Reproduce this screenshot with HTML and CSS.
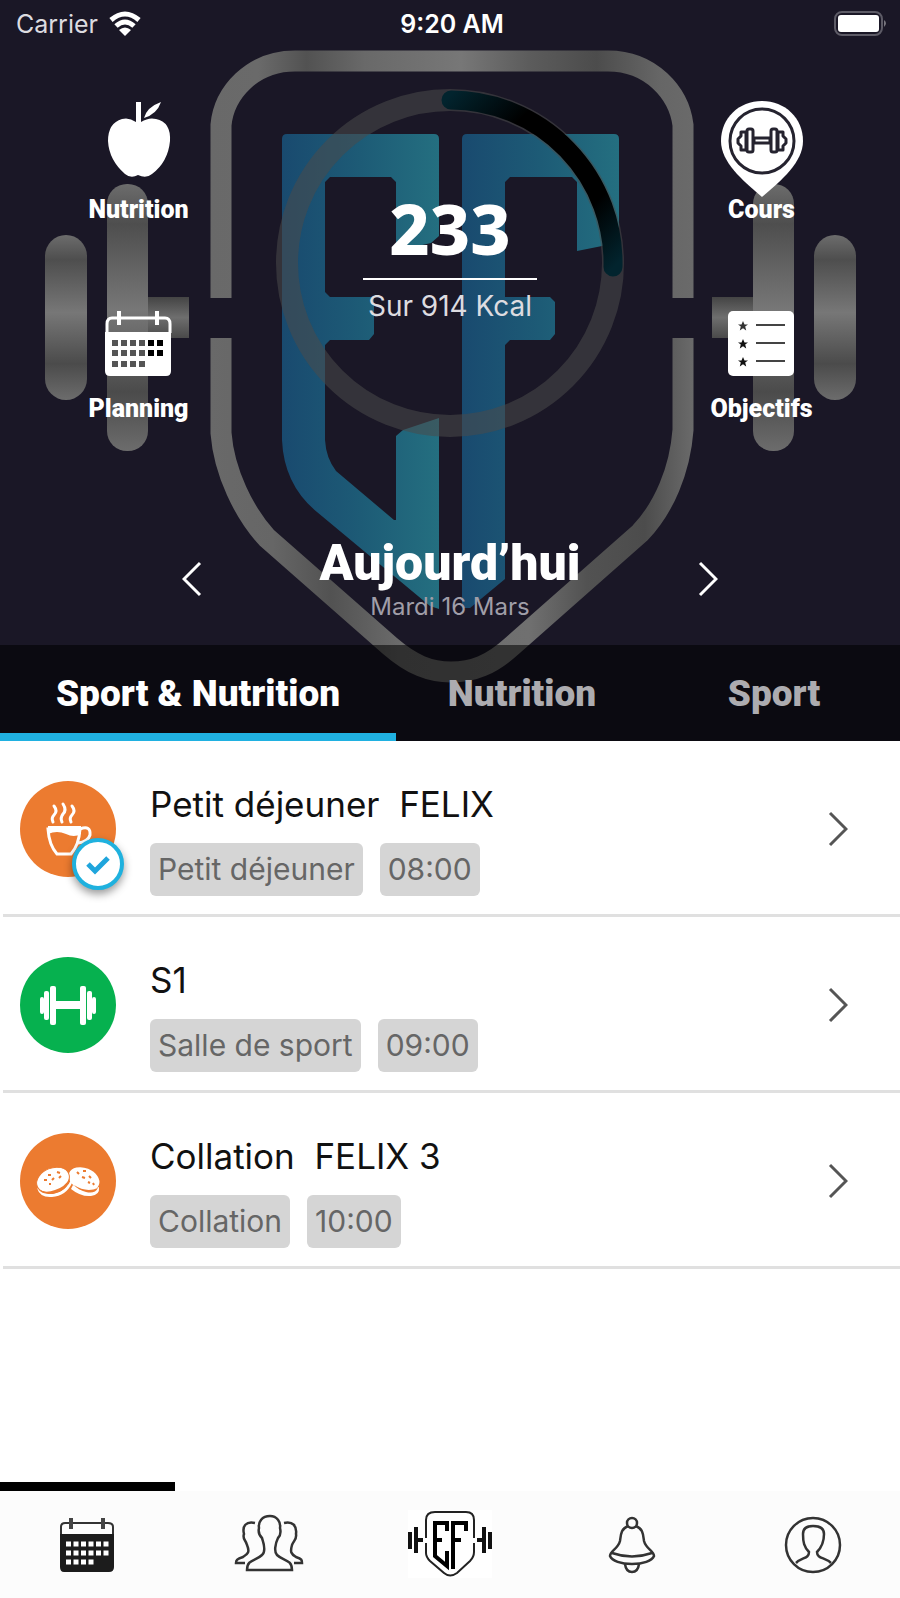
FILE: index.html
```
<!DOCTYPE html>
<html lang="fr">
<head>
    <meta charset="UTF-8">
    <meta name="viewport" content="width=device-width, initial-scale=1.0">
    <title>Aujourd’hui</title>
    <link rel="stylesheet" href="styles.css">
</head>
<body>
    <header class="hero">
        <!-- Emblem behind the dashboard -->
        <svg class="emblem" viewBox="0 0 900 741" aria-hidden="true">
            <defs>
                <linearGradient id="steel" gradientUnits="userSpaceOnUse" x1="210" y1="0" x2="693" y2="0">
                    <stop offset="0" stop-color="#696969"/>
                    <stop offset=".1" stop-color="#6a6a6a"/>
                    <stop offset=".2" stop-color="#525252"/>
                    <stop offset=".32" stop-color="#696969"/>
                    <stop offset=".52" stop-color="#777"/>
                    <stop offset=".66" stop-color="#5c5c5c"/>
                    <stop offset=".8" stop-color="#4c4c4c"/>
                    <stop offset=".93" stop-color="#666"/>
                    <stop offset="1" stop-color="#6a6a6a"/>
                </linearGradient>
                <linearGradient id="steelBottom" gradientUnits="userSpaceOnUse" x1="210" y1="0" x2="693" y2="0">
                    <stop offset="0" stop-color="#696969"/>
                    <stop offset=".13" stop-color="#666"/>
                    <stop offset=".25" stop-color="#525252"/>
                    <stop offset=".4" stop-color="#6c6c6c"/>
                    <stop offset=".66" stop-color="#707070"/>
                    <stop offset=".78" stop-color="#525252"/>
                    <stop offset=".9" stop-color="#4c4c4c"/>
                    <stop offset="1" stop-color="#6a6a6a"/>
                </linearGradient>
                <linearGradient id="plate" x1="0" y1="0" x2="0" y2="1">
                    <stop offset="0" stop-color="#6c6c6c"/>
                    <stop offset=".15" stop-color="#4e4e4e"/>
                    <stop offset=".47" stop-color="#777"/>
                    <stop offset=".78" stop-color="#4b4b4b"/>
                    <stop offset="1" stop-color="#6c6c6c"/>
                </linearGradient>
                <linearGradient id="bar" x1="0" y1="0" x2="0" y2="1">
                    <stop offset="0" stop-color="#444"/>
                    <stop offset=".5" stop-color="#6e6e6e"/>
                    <stop offset="1" stop-color="#4a4a4a"/>
                </linearGradient>
                <linearGradient id="blue">
                    <stop offset="0" stop-color="#194a6f"/>
                    <stop offset=".5" stop-color="#1d5b76"/>
                    <stop offset="1" stop-color="#246f80"/>
                </linearGradient>
            </defs>
            <g fill="url(#plate)">
                <rect x="45" y="235" width="42" height="165" rx="21"/>
                <rect x="107" y="184" width="41" height="267" rx="20"/>
                <rect x="753" y="184" width="41" height="267" rx="20"/>
                <rect x="814" y="235" width="42" height="165" rx="21"/>
            </g>
            <g fill="url(#bar)">
                <rect x="148" y="297" width="41" height="41"/>
                <rect x="712" y="297" width="41" height="41"/>
            </g>
            <g fill="none" stroke-width="21">
                <path d="M221 298V125C224 93 252 61 295 61H608C651 61 679 93 683 125V298" stroke="url(#steel)"/>
                <path d="M221 338V433C224 472 244 513 267 538L390 646C412 665 430 672 451 672C473 672 491 665 512 646L640 533C664 508 680 470 683 430V338" stroke="url(#steelBottom)"/>
            </g>
            <g fill="url(#blue)">
                <path d="M287 134H434Q439 134 439 139V236L431 243L396 251V182L391 177H330L325 182V292L330 297H374V334L369 340H330L325 345V440Q326 458 336 471L394 520H396V436L403 430L439 418V609L430 606L317 512Q284 485 282 440V139Q282 134 287 134Z"/>
                <path d="M467 134H614Q619 134 619 139V240L602 246L577 251V182L572 177H510L505 182V297H550L555 302V334L550 340H510L505 345V579L470 608H462V139Q462 134 467 134Z"/>
            </g>
        </svg>

        <div class="status-bar">
            <span class="carrier">Carrier
                <svg class="wifi" viewBox="0 0 34 26" aria-hidden="true">
                    <path d="M3 9Q17 -3 31 9M8 15Q17 7 26 15" fill="none" stroke="#fff" stroke-width="5"/>
                    <path d="M11 19Q17 14 23 19L17 25Z" fill="#fff"/>
                </svg>
            </span>
            <span class="clock">9:20 AM</span>
            <svg class="battery" viewBox="0 0 54 26" aria-hidden="true">
                <rect x="1" y="1" width="47" height="23" rx="7" fill="none" stroke="#5d5b66" stroke-width="2"/>
                <rect x="4" y="4" width="41" height="17" rx="3" fill="#fff"/>
                <path d="M50 9Q54 12 50 16Z" fill="#77757d"/>
            </svg>
        </div>

        <div class="dashboard">
            <nav class="shortcuts">
                <a href="#nutrition" class="shortcut">
                    <svg class="shortcut-icon" viewBox="0 0 82 98" aria-hidden="true">
                        <path d="M39 22V2H44V22Q52 17 59 19Q74 22 73 41Q71 62 55 74Q49 79 41 75Q34 79 28 74Q12 60 11 41Q11 23 25 19Q32 17 39 22Z" fill="#fff"/>
                        <path d="M47 18Q50 7 64 2Q60 14 47 18Z" fill="#fff"/>
                    </svg>
                    <span>Nutrition</span>
                </a>
                <a href="#planning" class="shortcut">
                    <svg class="shortcut-icon" viewBox="0 0 82 98" aria-hidden="true">
                        <path d="M10 34V25Q10 19 15 19H68Q73 19 73 25V34" fill="none" stroke="#fff" stroke-width="3"/>
                        <path d="M8 33H74V72Q74 77 69 77H13Q8 77 8 72Z" fill="#fff"/>
                        <path d="M22 12V26M60 12V26" stroke="#fff" stroke-width="4"/>
                        <path d="M15 44H48M15 54H48M15 65H48" stroke="#555" stroke-width="6" stroke-dasharray="6 3"/>
                        <path d="M51 44H66M51 54H66" stroke="#000" stroke-width="6" stroke-dasharray="6 3"/>
                    </svg>
                    <span>Planning</span>
                </a>
            </nav>

            <div class="calories">
                <svg class="ring" viewBox="0 0 350 350" aria-hidden="true">
                    <defs>
                        <linearGradient id="arc" gradientUnits="userSpaceOnUse" x1="170" y1="12" x2="336" y2="182">
                            <stop offset="0" stop-color="#02242e"/>
                            <stop offset=".28" stop-color="#000"/>
                            <stop offset=".75" stop-color="#000"/>
                            <stop offset="1" stop-color="#02242e"/>
                        </linearGradient>
                    </defs>
                    <circle cx="175" cy="175" r="163" fill="none" stroke="#4b4b4b" stroke-opacity=".55" stroke-width="22"/>
                    <path d="M176 12A163 163 0 0 1 338 179" fill="none" stroke="url(#arc)" stroke-width="19" stroke-linecap="round"/>
                </svg>
                <div class="calories-text">
                    <strong class="calories-value">233</strong>
                    <span class="calories-goal">Sur 914 Kcal</span>
                </div>
            </div>

            <nav class="shortcuts">
                <a href="#cours" class="shortcut">
                    <svg class="shortcut-icon" viewBox="0 0 82 98" aria-hidden="true">
                        <path d="M41 1C64 1 82 18 82 41C82 62 61 80 41 97C21 80 0 62 0 41C0 18 18 1 41 1Z" fill="#fff"/>
                        <circle cx="41" cy="41" r="32" fill="none" stroke="#25232f" stroke-width="3"/>
                        <g fill="#fff" stroke="#25232f" stroke-width="3" stroke-linejoin="round">
                            <path d="M33 38H49V43H33Z"/>
                            <path d="M25 32H20V36L17 39V43L20 46V50H25ZM57 32H62V36L65 39V43L62 46V50H57Z"/>
                            <rect x="26" y="29" width="6" height="23" rx="2"/>
                            <rect x="50" y="29" width="6" height="23" rx="2"/>
                        </g>
                    </svg>
                    <span>Cours</span>
                </a>
                <a href="#objectifs" class="shortcut">
                    <svg class="shortcut-icon" viewBox="0 0 82 98" aria-hidden="true">
                        <defs>
                            <path id="star" d="M0 -5L1.500 -1.600H5L2.200 .6L3.200 4.500L0 2.200L-3.200 4.500L-2.200 .6L-5 -1.600H-1.500Z"/>
                        </defs>
                        <rect x="8" y="12" width="66" height="65" rx="5" fill="#fff"/>
                        <path d="M36 26H65M36 44H65M36 62H65" stroke="#444" stroke-width="2"/>
                        <use href="#star" x="23" y="27" fill="#333"/>
                        <use href="#star" x="23" y="45" fill="#111"/>
                        <use href="#star" x="23" y="63" fill="#111"/>
                    </svg>
                    <span>Objectifs</span>
                </a>
            </nav>
        </div>

        <div class="day">
            <button type="button" class="day-button" aria-label="Jour précédent">
                <svg viewBox="0 0 20 36" aria-hidden="true"><path d="M18 2L2 18L18 34"/></svg>
            </button>
            <div class="day-text">
                <h1>Aujourd’hui</h1>
                <p>Mardi 16 Mars</p>
            </div>
            <button type="button" class="day-button" aria-label="Jour suivant">
                <svg viewBox="0 0 20 36" aria-hidden="true"><path d="M2 2L18 18L2 34"/></svg>
            </button>
        </div>

        <div class="tabs">
            <button type="button" class="tab active">Sport &amp; Nutrition</button>
            <button type="button" class="tab">Nutrition</button>
            <button type="button" class="tab">Sport</button>
        </div>
    </header>

    <main class="activities">
        <a href="#petit-dejeuner" class="activity">
            <span class="activity-icon">
                <svg viewBox="0 0 96 96" aria-hidden="true">
                    <circle cx="48" cy="48" r="48" fill="#ec7b30"/>
                    <g fill="none" stroke="#fff" stroke-width="3">
                        <path d="M34 25Q38 30 34 34Q31 37 33 41M43 23Q47 29 43 33Q40 37 42 41M52 25Q56 30 52 34Q49 37 51 41" stroke-linecap="round"/>
                        <path d="M28 48H60Q59 64 51 73H37Q29 64 28 48Z"/>
                        <path d="M60 48Q71 44 70 54Q68 61 58 62"/>
                    </g>
                    <path d="M28 45H61V53Q54 57 46 53Q37 49 28 53Z" fill="#fff"/>
                </svg>
                <svg class="done" viewBox="0 0 52 52" aria-hidden="true">
                    <circle cx="26" cy="26" r="24" fill="#fff" stroke="#1fb1de" stroke-width="4"/>
                    <path d="M16 26L23 33L36 20" fill="none" stroke="#1fa5dc" stroke-width="5"/>
                </svg>
            </span>
            <span class="activity-body">
                <span class="activity-title">Petit déjeuner&nbsp; FELIX</span>
                <span class="chips"><span class="chip">Petit déjeuner</span><span class="chip">08:00</span></span>
            </span>
            <svg class="chevron" viewBox="0 0 20 36" aria-hidden="true"><path d="M2 2L18 18L2 34"/></svg>
        </a>
        <a href="#s1" class="activity">
            <span class="activity-icon">
                <svg viewBox="0 0 96 96" aria-hidden="true">
                    <circle cx="48" cy="48" r="48" fill="#06b14f"/>
                    <g fill="#fff">
                        <rect x="36" y="44" width="24" height="8"/>
                        <rect x="30" y="29" width="6" height="39" rx="2"/>
                        <rect x="60" y="29" width="6" height="39" rx="2"/>
                        <rect x="24" y="34" width="5" height="29" rx="2"/>
                        <rect x="67" y="34" width="5" height="29" rx="2"/>
                        <rect x="20" y="40" width="4" height="17" rx="2"/>
                        <rect x="72" y="40" width="4" height="17" rx="2"/>
                    </g>
                </svg>
            </span>
            <span class="activity-body">
                <span class="activity-title">S1</span>
                <span class="chips"><span class="chip">Salle de sport</span><span class="chip">09:00</span></span>
            </span>
            <svg class="chevron" viewBox="0 0 20 36" aria-hidden="true"><path d="M2 2L18 18L2 34"/></svg>
        </a>
        <a href="#collation" class="activity">
            <span class="activity-icon">
                <svg viewBox="0 0 96 96" aria-hidden="true">
                    <circle cx="48" cy="48" r="48" fill="#ec7b30"/>
                    <g fill="#fff">
                        <ellipse cx="64" cy="46" rx="16" ry="11" transform="rotate(22 64 46)"/>
                        <path d="M79 54Q80 62 71 63Q61 64 51 56L53 52Q66 62 79 54Z"/>
                        <ellipse cx="33" cy="47" rx="17" ry="12" transform="rotate(-22 33 47)" stroke="#ec7b30"/>
                        <path d="M17 55Q20 65 32 64Q46 63 52 50V45Q46 59 33 61Q23 61 17 55Z"/>
                    </g>
                    <path d="M18 56Q25 61 35 57Q45 54 50 45Q49 56 36 60Q23 63 18 56ZM54 52Q66 60 78 55Q75 61 66 59Q58 57 54 52Z" fill="#ec7b30"/>
                    <path d="M24 47H27M28 42H31M32 47L34 45M37 39L40 40M39 45L41 43M29 51H31M57 39L59 41M63 38H66M62 44L65 45M69 43L71 45M68 49L70 50M73 50L74 52" stroke="#ec7b30" stroke-width="2"/>
                </svg>
            </span>
            <span class="activity-body">
                <span class="activity-title">Collation&nbsp; FELIX 3</span>
                <span class="chips"><span class="chip">Collation</span><span class="chip">10:00</span></span>
            </span>
            <svg class="chevron" viewBox="0 0 20 36" aria-hidden="true"><path d="M2 2L18 18L2 34"/></svg>
        </a>
    </main>

    <footer class="bottom">
        <div class="indicator"></div>
        <nav class="bottom-nav">
            <a href="#planning" aria-label="Planning">
                <svg viewBox="0 0 84 68" aria-hidden="true">
                    <path d="M16 28V17Q16 13 20 13H63Q68 13 68 17V28" fill="none" stroke="#333" stroke-width="2"/>
                    <path d="M15 24H69V57Q69 62 64 62H19Q15 62 15 57Z" fill="#1c1c1c"/>
                    <path d="M26 8V19M58 8V19" stroke="#444" stroke-width="4"/>
                    <path d="M21 34H64M21 43H64M21 52H49" stroke="#fff" stroke-width="5" stroke-dasharray="5 2.500"/>
                </svg>
            </a>
            <a href="#communaute" aria-label="Communauté">
                <svg viewBox="0 0 84 68" aria-hidden="true">
                    <g fill="none" stroke="#333" stroke-width="2.500">
                        <path d="M43 6C35 6 31 12 32 18C31 22 33 26 35 28C37 34 39 42 35 45C29 51 20 49 20 60H65C65 49 56 51 50 45C47 42 48 34 51 28C53 26 54 22 53 18C54 12 50 6 43 6Z"/>
                        <path d="M28 13C19 11 15 16 17 24C15 29 19 30 20 35C23 42 21 44 16 47C10 49 9 50 9 53H18"/>
                        <path d="M57 13C66 11 70 16 69 24C70 29 67 30 65 35C63 42 64 44 69 47C75 49 75 50 75 53H67"/>
                    </g>
                </svg>
            </a>
            <a href="#accueil" class="home" aria-label="Accueil">
                <svg viewBox="0 0 84 68" aria-hidden="true">
                    <path d="M18 28V10Q18 2 27 2H58Q66 2 66 10V28M18 33V43Q18 47 22 51L36 63Q42 68 49 63L62 51Q66 47 66 42V33" fill="none" stroke="#222" stroke-width="2"/>
                    <path d="M2 22V39M8 17V43M8 30H15M82 22V39M76 17V43M76 30H69" fill="none" stroke="#111" stroke-width="4"/>
                    <path d="M39 21V13H27V46L39 56V41M27 30H34M45 59V13H58V21M45 30H53" fill="none" stroke="#000" stroke-width="4"/>
                </svg>
            </a>
            <a href="#notifications" aria-label="Notifications">
                <svg viewBox="0 0 84 68" aria-hidden="true">
                    <g fill="none" stroke="#333" stroke-width="2.500">
                        <circle cx="42" cy="13" r="5"/>
                        <path d="M38 16C31 19 31 24 30 31C28 39 20 41 20 46C22 51 31 54 42 54C53 54 62 51 64 46C64 41 56 39 54 31C53 24 53 19 46 16"/>
                        <path d="M22 43Q42 50 62 43M35 54Q36 62 42 62Q48 62 49 54"/>
                    </g>
                </svg>
            </a>
            <a href="#profil" aria-label="Profil">
                <svg viewBox="0 0 84 68" aria-hidden="true">
                    <g fill="none" stroke="#333" stroke-width="2.500">
                        <circle cx="42" cy="35" r="27"/>
                        <path d="M25 53C31 47 38 49 38 42C33 37 32 32 32 24C32 18 36 16 42 16C49 16 53 18 53 24C53 32 51 37 46 42C46 49 54 47 60 53"/>
                    </g>
                </svg>
            </a>
        </nav>
    </footer>
</body>
</html>
```

FILE: styles.css
```
* {
    box-sizing: border-box;
}
body {
    margin: 0;
    min-height: 100vh;
    display: flex;
    flex-direction: column;
    font-family: Inter, "Liberation Sans", sans-serif;
    background: #fff;
    color: #111;
}
a {
    color: inherit;
    text-decoration: none;
}
button {
    border: none;
    background: none;
    padding: 0;
    color: inherit;
    font: inherit;
    cursor: pointer;
}
svg {
    display: block;
}

/* Header */
.hero {
    position: relative;
    background: #1a1726;
    color: #fff;
}
.emblem {
    position: absolute;
    top: 0;
    left: 0;
    width: 100%;
    height: 100%;
}
.status-bar,
.dashboard,
.day,
.tabs {
    position: relative;
}
.status-bar {
    display: grid;
    grid-template-columns: 1fr auto 1fr;
    align-items: center;
    height: 48px;
    padding: 0 12px 0 16px;
    font-size: 25px;
}
.carrier {
    display: flex;
    align-items: center;
    gap: 10px;
    color: #dddce0;
}
.wifi {
    width: 34px;
    height: 26px;
}
.clock {
    font-weight: 600;
}
.battery {
    width: 54px;
    height: 26px;
    justify-self: end;
}
.dashboard {
    display: grid;
    grid-template-columns: 1fr 350px 1fr;
    padding: 40px 2px 0;
}
.shortcuts {
    display: flex;
    flex-direction: column;
    align-items: center;
    gap: 77px;
    padding-top: 12px;
}
.shortcut {
    display: flex;
    flex-direction: column;
    align-items: center;
    font-family: Roboto, sans-serif;
    font-size: 25px;
    font-weight: 900;
    line-height: 24px;
}
.shortcut-icon {
    width: 82px;
    height: 98px;
}
.calories {
    display: grid;
}
.ring,
.calories-text {
    grid-area: 1 / 1;
}
.ring {
    width: 350px;
    height: 350px;
}
.calories-text {
    display: flex;
    flex-direction: column;
    align-items: center;
    padding-top: 98px;
}
.calories-value {
    width: 174px;
    padding-bottom: 8px;
    border-bottom: 2px solid #fff;
    font-family: "Noto Sans", sans-serif;
    font-size: 70px;
    font-weight: 800;
    line-height: 84px;
    text-align: center;
}
.calories-goal {
    margin-top: 8px;
    color: #dddce0;
    font-size: 28px;
    line-height: 36px;
}
.day {
    display: flex;
    justify-content: space-between;
    align-items: center;
    height: 207px;
    padding: 74px 182px 0;
}
.day-button svg {
    width: 20px;
    height: 36px;
    fill: none;
    stroke: #fff;
    stroke-width: 3;
}
.day-text {
    text-align: center;
}
.day-text h1 {
    margin: 0;
    font-family: Roboto, sans-serif;
    font-size: 50px;
    font-weight: 900;
    line-height: 56px;
}
.day-text p {
    margin: 0;
    color: #a09ea8;
    font-size: 24px;
    line-height: 32px;
}
.tabs {
    display: grid;
    grid-template-columns: 44% 28% 28%;
    background: rgba(0, 0, 0, 0.55);
}
.tab {
    height: 96px;
    border-top: 8px solid transparent;
    border-bottom: 8px solid transparent;
    color: #adacb0;
    font-family: Roboto, sans-serif;
    font-size: 37px;
    font-weight: 900;
}
.tab.active {
    border-bottom-color: #20b1e1;
    color: #fff;
}

/* Activities */
.activities {
    flex: 1;
}
.activity {
    display: flex;
    height: 176px;
    margin-left: 3px;
    padding: 40px 52px 0 17px;
    border-bottom: 3px solid #e0e0e0;
}
.activity-icon {
    position: relative;
    width: 96px;
    height: 96px;
}
.done {
    position: absolute;
    right: -8px;
    bottom: -13px;
    width: 52px;
    height: 52px;
    filter: drop-shadow(0 4px 4px rgba(0, 0, 0, 0.4));
}
.activity-body {
    flex: 1;
    display: flex;
    flex-direction: column;
    margin-left: 34px;
}
.activity-title {
    margin-bottom: 16px;
    font-size: 35px;
    line-height: 46px;
}
.chips {
    display: flex;
    gap: 17px;
}
.chip {
    padding: 0 8px;
    border-radius: 6px;
    background: #d5d5d5;
    color: #666;
    font-size: 30px;
    line-height: 53px;
}
.chevron {
    width: 20px;
    height: 36px;
    margin-top: 30px;
    fill: none;
    stroke: #555;
    stroke-width: 3;
}

/* Bottom navigation */
.indicator {
    width: calc(20% - 5px);
    height: 9px;
    background: #000;
}
.bottom-nav {
    display: flex;
    justify-content: space-between;
    padding: 19px 45px 20px;
    background: #fcfcfc;
}
.bottom-nav svg {
    width: 84px;
    height: 68px;
}
.home {
    background: #fff;
}
```
